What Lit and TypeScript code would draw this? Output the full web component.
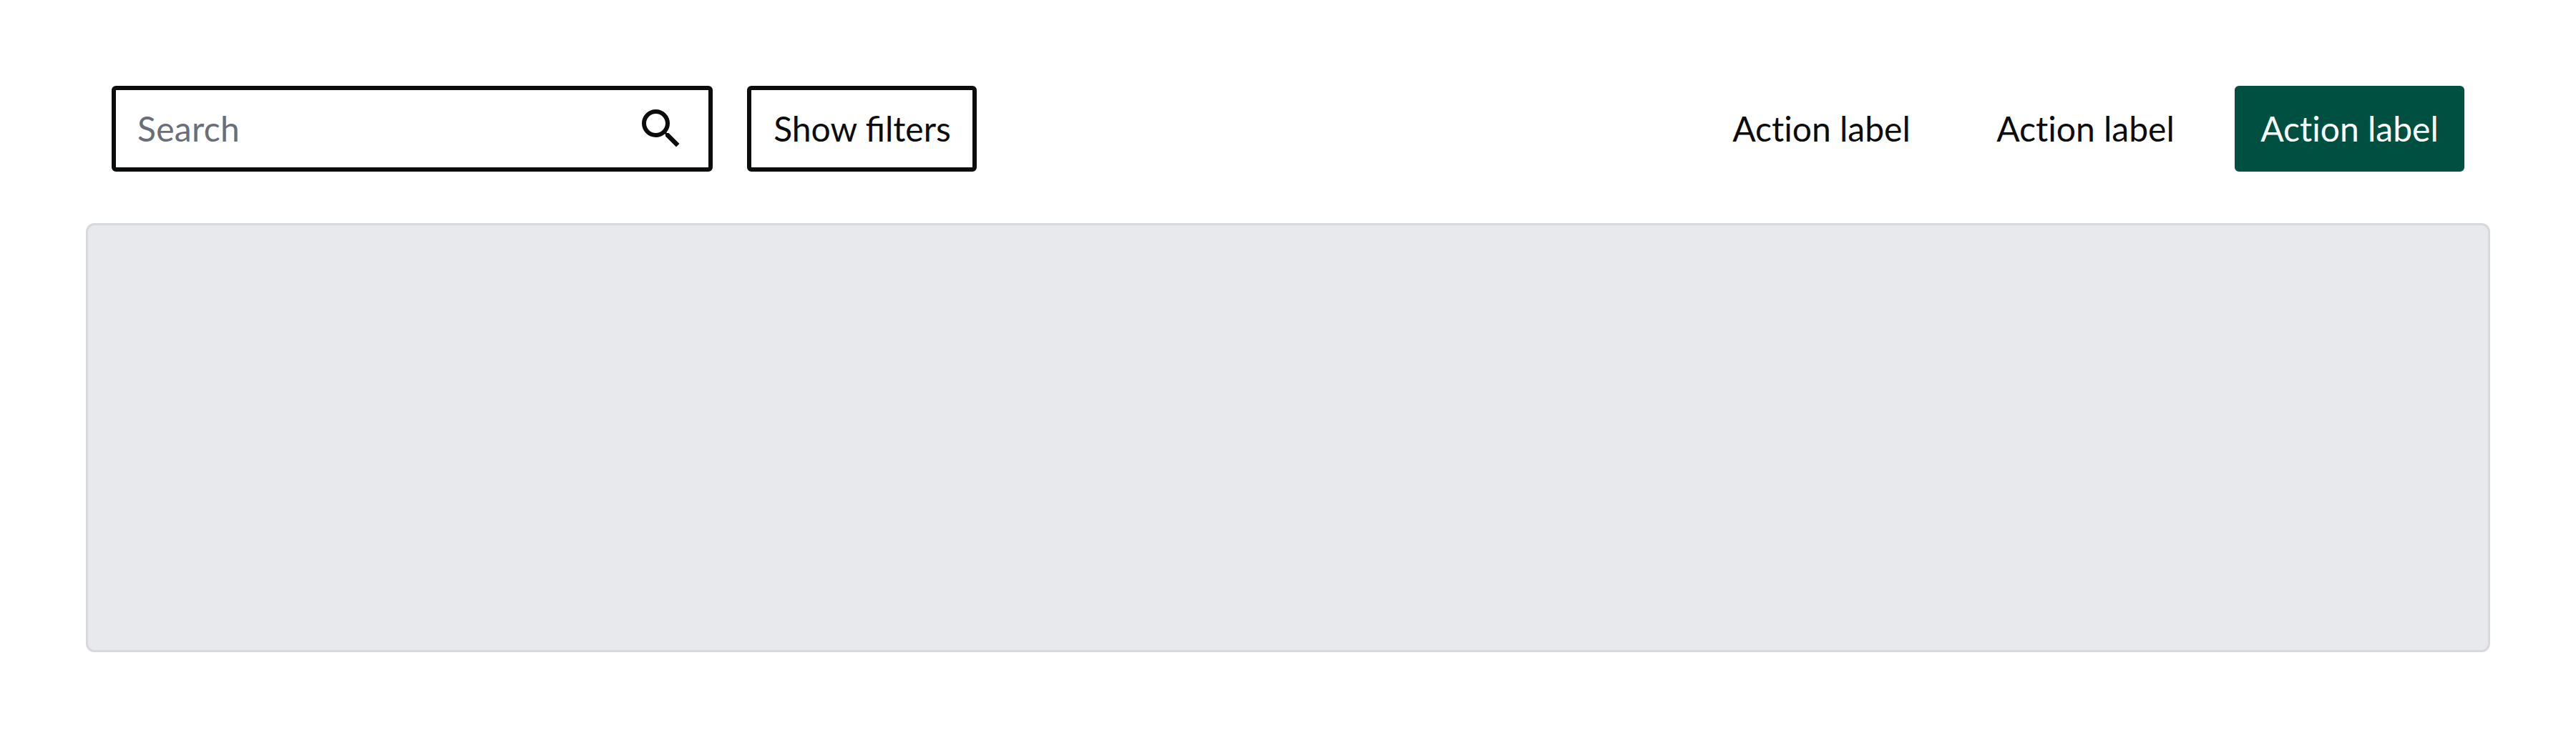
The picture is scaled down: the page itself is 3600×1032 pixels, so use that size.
import { LitElement, html, css } from "lit";

class AppRoot extends LitElement {
  static styles = css`
    :host {
      display: block;
      box-sizing: border-box;
      height: 1032px;
      padding: 120px;
      background: #fff;
      font-family: Lato, sans-serif;
      font-size: 48px;
      line-height: 71px;
      color: #0b0d0c;
    }
    .toolbar {
      display: flex;
      align-items: center;
      justify-content: space-between;
      padding: 0 36px;
      height: 120px;
    }
    .filters,
    .actions {
      display: flex;
      gap: 48px;
    }
    .search,
    .button {
      box-sizing: border-box;
      display: flex;
      align-items: center;
      justify-content: center;
      height: 120px;
      border: 6px solid transparent;
      border-radius: 6px;
      white-space: nowrap;
    }
    .button {
      width: 321px;
      font-variant-ligatures: none;
    }
    .search {
      width: 840px;
      padding: 0 30px;
      justify-content: space-between;
      border-color: #0b0d0c;
      color: #6a6e7a;
      letter-spacing: 0.3px;
    }
    .label {
      padding-bottom: 1px;
    }
    .outlined {
      border-color: #0b0d0c;
      font-variant-ligatures: normal;
    }
    .outlined .label {
      padding-left: 1px;
    }
    .primary {
      background: #005042;
      border-color: #005042;
      color: #fff;
    }
    .icon {
      width: 72px;
      height: 72px;
      fill: #0b0d0c;
    }
    .content {
      box-sizing: border-box;
      margin-top: 72px;
      height: 600px;
      border: 3px solid #d8d9df;
      border-radius: 12px;
      background: #e8e9ed;
    }
  `;

  render() {
    return html`
      <div class="toolbar">
        <div class="filters">
          <div class="search">
            <span class="label">Search</span>
            <svg class="icon" viewBox="0 0 24 24">
              <path d="M15.5 14h-.79l-.28-.27A6.471 6.471 0 0 0 16 9.5 6.5 6.5 0 1 0 9.5 16c1.61 0 3.09-.59 4.23-1.57l.27.28v.79l5 4.99L20.49 19l-4.99-5zm-6 0C7.01 14 5 11.99 5 9.5S7.01 5 9.5 5 14 7.01 14 9.5 11.99 14 9.5 14z" />
            </svg>
          </div>
          <div class="button outlined"><span class="label">Show filters</span></div>
        </div>
        <div class="actions">
          <div class="button"><span class="label">Action label</span></div>
          <div class="button"><span class="label">Action label</span></div>
          <div class="button primary"><span class="label">Action label</span></div>
        </div>
      </div>
      <div class="content"></div>
    `;
  }
}

customElements.define("app-root", AppRoot);
